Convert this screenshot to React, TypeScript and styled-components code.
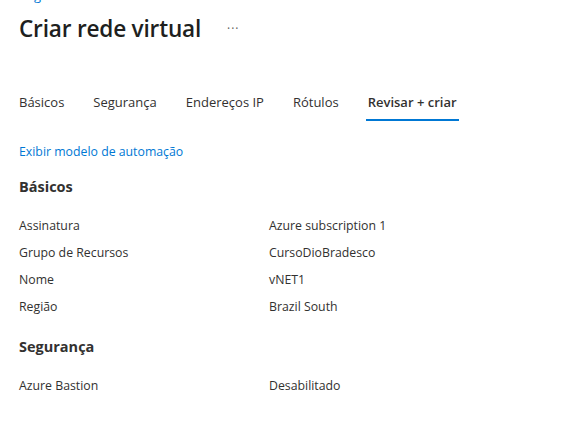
import React from "react";
import styled, { createGlobalStyle } from "styled-components";

const GlobalStyle = createGlobalStyle`
  html, body {
    margin: 0;
    padding: 0;
    background: #fff;
  }
  body {
    font-family: "Open Sans", "Noto Sans", sans-serif;
    color: #323130;
    overflow: hidden;
  }
`;

type Row = { label: string; value: string };

const sections: { title: string; rows: Row[] }[] = [
  {
    title: "Básicos",
    rows: [
      { label: "Assinatura", value: "Azure subscription 1" },
      { label: "Grupo de Recursos", value: "CursoDioBradesco" },
      { label: "Nome", value: "vNET1" },
      { label: "Região", value: "Brazil South" },
    ],
  },
  {
    title: "Segurança",
    rows: [{ label: "Azure Bastion", value: "Desabilitado" }],
  },
];

const tabs = ["Básicos", "Segurança", "Endereços IP", "Rótulos", "Revisar + criar"];

const App: React.FC = () => {
  return (
    <>
      <GlobalStyle />
      <Page>
        <Breadcrumb>
          <Crumb>Página inicial</Crumb>
          <Chevron>&gt;</Chevron>
          <Crumb>Redes virtuais</Crumb>
          <Chevron>&gt;</Chevron>
        </Breadcrumb>
        <TitleRow>
          <Title>Criar rede virtual</Title>
          <More>···</More>
        </TitleRow>
        <Tabs>
          {tabs.map((t, i) => (
            <Tab key={t} $active={i === tabs.length - 1}>
              {t}
            </Tab>
          ))}
        </Tabs>
        <Link>Exibir modelo de automação</Link>
        {sections.map((s) => (
          <Section key={s.title}>
            <SectionTitle>{s.title}</SectionTitle>
            <Rows>
              {s.rows.map((r) => (
                <DetailRow key={r.label}>
                  <Label>{r.label}</Label>
                  <Value>{r.value}</Value>
                </DetailRow>
              ))}
            </Rows>
          </Section>
        ))}
      </Page>
    </>
  );
};

export default App;

const Page = styled.div`
  padding: 0 19px;
  display: flex;
  flex-direction: column;
`;

const Breadcrumb = styled.div`
  display: flex;
  align-items: center;
  gap: 8px;
  height: 18px;
  margin-top: -14px;
  font-size: 13px;
  overflow: hidden;
`;

const Crumb = styled.span`
  color: #0078d4;
`;

const Chevron = styled.span`
  color: #a19f9d;
  font-size: 11px;
`;

const TitleRow = styled.div`
  display: flex;
  align-items: center;
  gap: 26px;
  margin-top: 7px;
  height: 34px;
`;

const Title = styled.h1`
  margin: 0;
  font-size: 22.6px;
  font-weight: 600;
  color: #201f1e;
  letter-spacing: -0.2px;
`;

const More = styled.span`
  font-size: 12px;
  color: #605e5c;
  letter-spacing: 1px;
`;

const Tabs = styled.div`
  display: flex;
  gap: 25px;
  margin-top: 48px;
  margin-left: -2px;
`;

const Tab = styled.div<{ $active?: boolean }>`
  font-size: 13px;
  font-weight: ${(p) => (p.$active ? 600 : 400)};
  color: #323130;
  padding: 0 2px 8px;
  border-bottom: 2px solid ${(p) => (p.$active ? "#0078d4" : "transparent")};
`;

const Link = styled.a`
  margin-top: 22px;
  font-size: 12.3px;
  color: #0078d4;
  cursor: pointer;
`;

const Section = styled.div`
  display: flex;
  flex-direction: column;
  margin-top: 17px;
  & + & {
    margin-top: 21px;
  }
`;

const SectionTitle = styled.div`
  font-size: 14.5px;
  font-weight: 700;
  color: #323130;
  margin-bottom: 20px;
`;

const Rows = styled.div`
  display: flex;
  flex-direction: column;
  gap: 8px;
`;

const DetailRow = styled.div`
  display: grid;
  grid-template-columns: 250px 1fr;
  font-size: 12.3px;
  line-height: 19px;
`;

const Label = styled.span`
  color: #323130;
`;

const Value = styled.span`
  color: #323130;
`;
